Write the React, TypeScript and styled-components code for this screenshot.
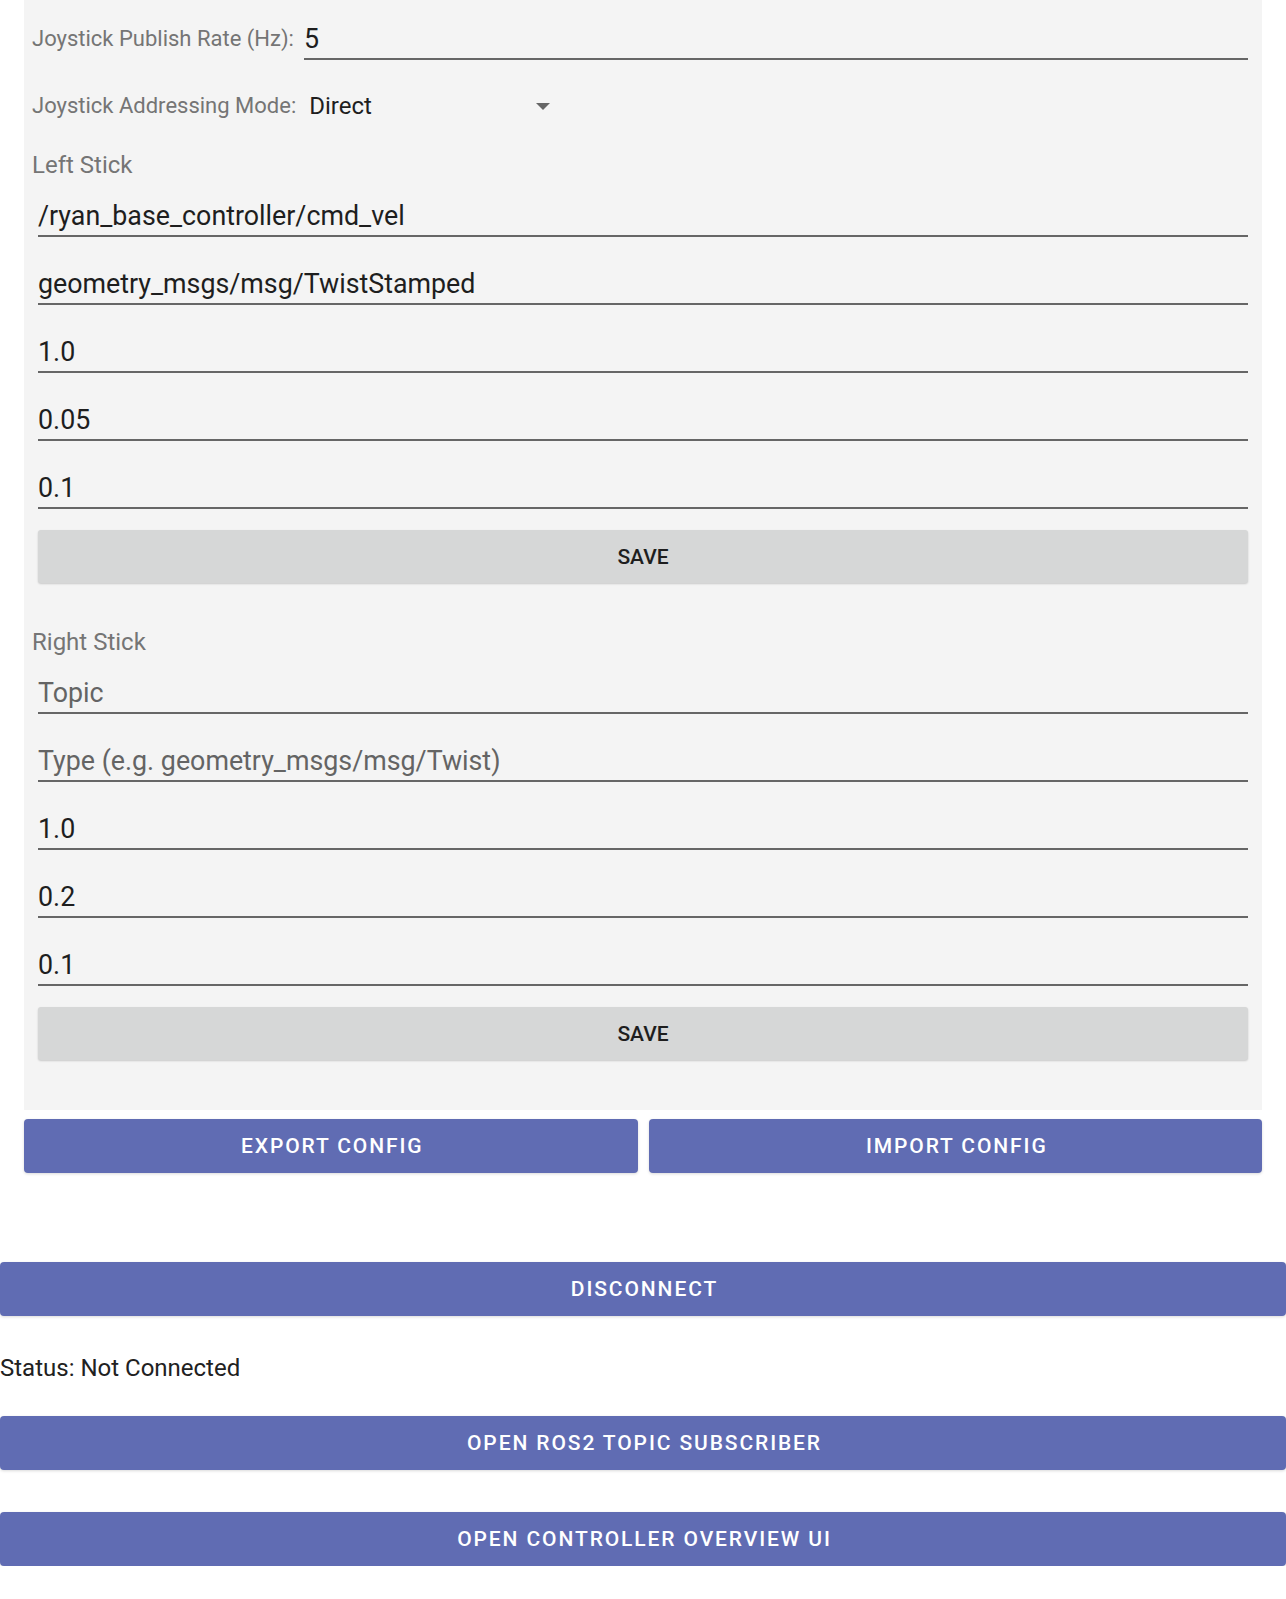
import React from "react";
import styled, { createGlobalStyle } from "styled-components";

const GlobalStyle = createGlobalStyle`
  body {
    margin: 0;
    background: #fff;
    font-family: Roboto, "Liberation Sans", sans-serif;
    color: #212121;
  }
`;

const Page = styled.div`
  width: 1286px;
  display: flex;
  flex-direction: column;
`;

const Panel = styled.div`
  margin: 0 24px;
  padding: 12px 14px 50px 8px;
  background-color: #f4f4f4;
  display: flex;
  flex-direction: column;
`;

const Row = styled.div<{ $top?: number }>`
  display: flex;
  align-items: flex-start;
  margin-top: ${({ $top = 0 }) => $top}px;
`;

const RowLabel = styled.div<{ $gap: number }>`
  height: 48px;
  box-sizing: border-box;
  padding-top: ${({ $gap }) => ($gap ? 8 : 0)}px;
  line-height: ${({ $gap }) => ($gap ? 38 : 48)}px;
  font-size: 22px;
  color: #757575;
  margin-right: 10px;
  white-space: nowrap;
`;

const SectionLabel = styled.div<{ $top: number }>`
  margin-top: ${({ $top }) => $top}px;
  font-size: 24px;
  line-height: 28px;
  color: #757575;
`;

const Field = styled.input<{ $top?: number; $inline?: boolean }>`
  display: block;
  box-sizing: border-box;
  height: 48px;
  margin: ${({ $top = 20 }) => $top}px 0 0 ${({ $inline }) => ($inline ? 0 : 6)}px;
  padding: 8px 0 0 0;
  width: ${({ $inline }) => ($inline ? "auto" : "calc(100% - 6px)")};
  flex: ${({ $inline }) => ($inline ? 1 : "none")};
  border: none;
  border-bottom: 2px solid #666;
  background: transparent;
  font-family: Roboto, "Liberation Sans", sans-serif;
  font-size: 26.8px;
  line-height: 38px;
  color: #1e1e1e;
  outline: none;
  &::placeholder {
    color: #646464;
  }
`;

const Spinner = styled.div`
  width: 258px;
  height: 48px;
  display: flex;
  align-items: center;
  justify-content: space-between;
  padding: 0 14px 0 3px;
  box-sizing: border-box;
  font-size: 24px;
  color: #1e1e1e;
`;

const Caret = styled.span`
  width: 0;
  height: 0;
  border-left: 7px solid transparent;
  border-right: 7px solid transparent;
  border-top: 7px solid #666;
`;

const SaveButton = styled.button`
  display: block;
  margin: 21px 0 0 6px;
  width: calc(100% - 6px);
  height: 53px;
  border: none;
  border-radius: 3px;
  background-color: #d6d7d7;
  box-shadow: 0 1px 2px rgba(0, 0, 0, 0.18);
  font-family: Roboto, "Liberation Sans", sans-serif;
  font-weight: 500;
  font-size: 21px;
  color: #1e1e1e;
  text-transform: uppercase;
`;

const ButtonRow = styled.div`
  margin: 9px 24px 0;
  display: grid;
  grid-template-columns: 1fr 1fr;
  gap: 11px;
`;

const PrimaryButton = styled.button<{ $top?: number }>`
  display: block;
  width: 100%;
  height: 54px;
  margin-top: ${({ $top = 0 }) => $top}px;
  padding: 0 0 0 3px;
  border: none;
  border-radius: 4px;
  background-color: #606cb3;
  box-shadow: 0 1px 3px rgba(0, 0, 0, 0.15);
  font-family: Roboto, "Liberation Sans", sans-serif;
  font-weight: 500;
  font-size: 21px;
  letter-spacing: 0.09em;
  color: #fff;
  text-transform: uppercase;
`;

const Status = styled.div`
  margin-top: 38px;
  font-size: 24px;
  line-height: 28px;
  color: #212121;
`;

type Stick = {
  name: string;
  top: number;
  topic: string;
  type: string;
  values: string[];
};

const sticks: Stick[] = [
  {
    name: "Left Stick",
    top: 21,
    topic: "/ryan_base_controller/cmd_vel",
    type: "geometry_msgs/msg/TwistStamped",
    values: ["1.0", "0.05", "0.1"],
  },
  {
    name: "Right Stick",
    top: 45,
    topic: "",
    type: "",
    values: ["1.0", "0.2", "0.1"],
  },
];

const StickSection = ({ stick }: { stick: Stick }) => (
  <>
    <SectionLabel $top={stick.top}>{stick.name}</SectionLabel>
    <Field $top={10} defaultValue={stick.topic} placeholder="Topic" />
    <Field
      defaultValue={stick.type}
      placeholder="Type (e.g. geometry_msgs/msg/Twist)"
    />
    {stick.values.map((v, i) => (
      <Field key={i} defaultValue={v} />
    ))}
    <SaveButton>Save</SaveButton>
  </>
);

export default function App() {
  return (
    <Page>
      <GlobalStyle />
      <Panel>
        <Row>
          <RowLabel $gap={1}>Joystick Publish Rate (Hz):</RowLabel>
          <Field $inline $top={0} defaultValue="5" />
        </Row>
        <Row $top={22}>
          <RowLabel $gap={0}>Joystick Addressing Mode:</RowLabel>
          <Spinner>
            <span>Direct</span>
            <Caret />
          </Spinner>
        </Row>
        {sticks.map((s) => (
          <StickSection key={s.name} stick={s} />
        ))}
      </Panel>
      <ButtonRow>
        <PrimaryButton>Export Config</PrimaryButton>
        <PrimaryButton>Import Config</PrimaryButton>
      </ButtonRow>
      <PrimaryButton $top={89}>Disconnect</PrimaryButton>
      <Status>Status: Not Connected</Status>
      <PrimaryButton $top={34}>Open ROS2 Topic Subscriber</PrimaryButton>
      <PrimaryButton $top={42}>Open Controller Overview UI</PrimaryButton>
    </Page>
  );
}
